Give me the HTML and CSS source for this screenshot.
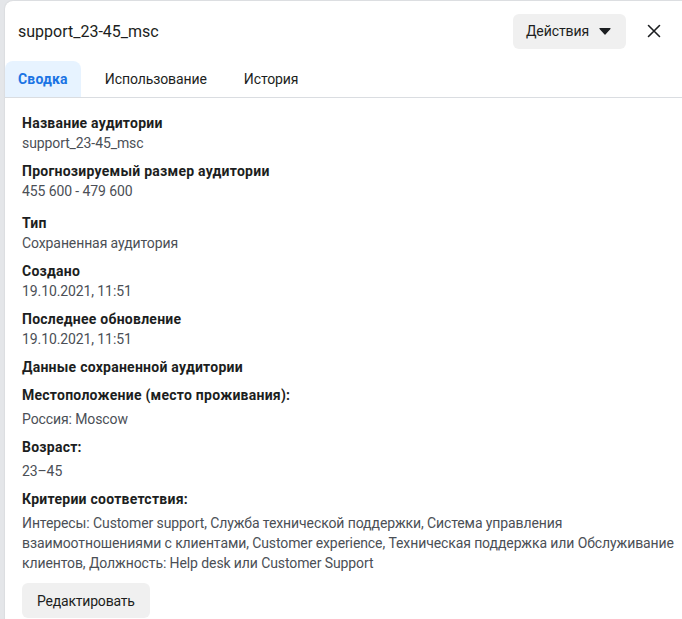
FILE: index.html
```html
<!DOCTYPE html>
<html lang="ru">
<head>
<meta charset="utf-8">
<link rel="stylesheet" href="styles.css">
</head>
<body>
<div class="panel">
  <div class="header">
    <div class="title">support_23-45_msc</div>
    <button class="actions">Действия
      <svg class="caret" width="12" height="8" viewBox="0 0 12 8"><path d="M1 1.5 L11 1.5 L6 7 Z" fill="#1c1e21" stroke="#1c1e21" stroke-width="1.2" stroke-linejoin="round"/></svg>
    </button>
    <button class="close" aria-label="close">
      <svg width="14" height="14" viewBox="0 0 14 14"><path d="M1.5 1.5 L12.5 12.5 M12.5 1.5 L1.5 12.5" stroke="#1c1e21" stroke-width="1.6" stroke-linecap="round"/></svg>
    </button>
  </div>
  <div class="tabs">
    <div class="tab active">Сводка</div>
    <div class="tab">Использование</div>
    <div class="tab">История</div>
  </div>
  <div class="content">
    <div class="group">
      <div class="label">Название аудитории</div>
      <div class="value">support_23-45_msc</div>
    </div>
    <div class="group wide">
      <div class="label">Прогнозируемый размер аудитории</div>
      <div class="value">455 600 - 479 600</div>
    </div>
    <div class="group">
      <div class="label">Тип</div>
      <div class="value">Сохраненная аудитория</div>
    </div>
    <div class="group">
      <div class="label">Создано</div>
      <div class="value">19.10.2021, 11:51</div>
    </div>
    <div class="group">
      <div class="label">Последнее обновление</div>
      <div class="value">19.10.2021, 11:51</div>
    </div>
    <div class="group">
      <div class="label">Данные сохраненной аудитории</div>
    </div>
    <div class="group sub">
      <div class="label">Местоположение (место проживания):</div>
      <div class="value">Россия: Moscow</div>
    </div>
    <div class="group sub">
      <div class="label">Возраст:</div>
      <div class="value">23–45</div>
    </div>
    <div class="group sub">
      <div class="label">Критерии соответствия:</div>
      <div class="value">Интересы: Customer support, Служба технической поддержки, Система управления взаимоотношениями с клиентами, Customer experience, Техническая поддержка или Обслуживание клиентов, Должность: Help desk или Customer Support</div>
    </div>
    <button class="edit">Редактировать</button>
  </div>
</div>
</body>
</html>
```
FILE: styles.css
```css
html, body {
  margin: 0;
  padding: 0;
}
body {
  background: #e4e6e9;
  font-family: Roboto, "Liberation Sans", Arial, sans-serif;
  color: #1c1e21;
  width: 682px;
  height: 619px;
  overflow: hidden;
}
.panel {
  margin: 1px 0 0 5px;
  background: #fff;
  border-radius: 8px 0 0 0;
  height: 640px;
  box-shadow: 0 0 2px rgba(0,0,0,0.12);
}
.header {
  display: flex;
  align-items: center;
  height: 60px;
  padding: 0 14px 0 13px;
}
.title {
  flex: 1;
  font-size: 16px;
  color: #1c1e21;
}
.actions {
  display: flex;
  align-items: center;
  gap: 10px;
  height: 35px;
  padding: 0 15px 0 13px;
  border: none;
  border-radius: 6px;
  background: #f0f0f0;
  font-family: inherit;
  font-size: 14px;
  letter-spacing: -0.1px;
  color: #1c1e21;
}
.caret {
  display: block;
}
.close {
  width: 28px;
  height: 28px;
  margin-left: 14px;
  border: none;
  background: transparent;
  display: flex;
  align-items: center;
  justify-content: center;
  padding: 0;
}
.tabs {
  display: flex;
  gap: 11px;
  border-bottom: 1px solid #dadde1;
}
.tab {
  height: 36px;
  line-height: 36px;
  padding: 0 13px;
  font-size: 14px;
  letter-spacing: -0.1px;
  color: #1c1e21;
  border-radius: 8px 8px 0 0;
}
.tab.active {
  background: #e7f3ff;
  color: #1b74e4;
  font-weight: 700;
  letter-spacing: 0.2px;
}
.content {
  padding: 15px 0 0 17px;
}
.group {
  margin-bottom: 8px;
}
.group.wide {
  margin-bottom: 12px;
}
.label {
  font-size: 14px;
  line-height: 20px;
  font-weight: 700;
  letter-spacing: 0.25px;
  color: #1c1e21;
}
.value {
  font-size: 14px;
  line-height: 20px;
  letter-spacing: -0.1px;
  color: #4b4f56;
}
.sub .value {
  margin-top: 4px;
}
.edit {
  margin-top: 2px;
  height: 35px;
  padding: 0 15px;
  border: none;
  border-radius: 6px;
  background: #f0f0f0;
  font-family: inherit;
  font-size: 14px;
  letter-spacing: -0.2px;
  color: #1c1e21;
}
```
